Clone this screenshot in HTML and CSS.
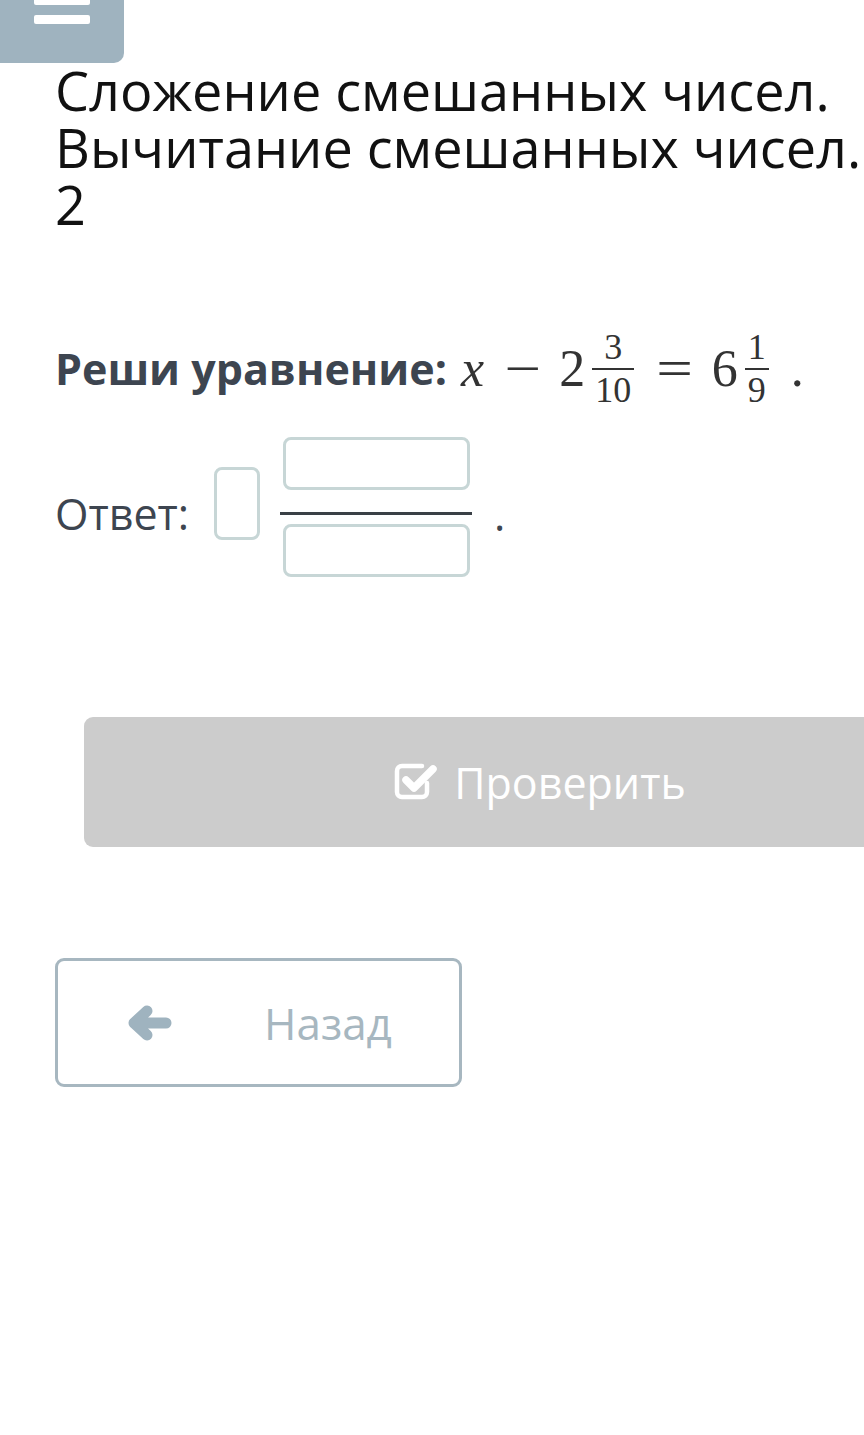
FILE: index.html
```html
<!DOCTYPE html>
<html lang="ru">
<head>
    <meta charset="UTF-8">
    <meta name="viewport" content="width=device-width, initial-scale=1.0">
    <title>Сложение смешанных чисел</title>
    <link rel="stylesheet" href="styles.css">
</head>
<body>
    <div class="menu-btn">
        <span class="bar"></span>
        <span class="bar"></span>
    </div>
    <div class="page">
        <h1 class="title">Сложение смешанных чисел. Вычитание смешанных чисел. 2</h1>

        <div class="task">
            <b>Реши уравнение:</b>
            <span class="math">
                <i class="var">x</i>
                <span class="op">−</span>
                <span class="num">2</span>
                <span class="frac"><span class="top">3</span><span class="line"></span><span class="bot">10</span></span>
                <span class="op">=</span>
                <span class="num">6</span>
                <span class="frac"><span class="top">1</span><span class="line"></span><span class="bot">9</span></span>
                <span class="dot">.</span>
            </span>
        </div>

        <div class="answer">
            <span class="answer-label">Ответ:</span>
            <input class="box whole" type="text">
            <span class="answer-frac">
                <input class="box part" type="text">
                <span class="answer-line"></span>
                <input class="box part" type="text">
            </span>
            <span class="answer-dot">.</span>
        </div>

        <button class="check-btn">
            <svg class="check-icon" width="44" height="40" viewBox="0 0 44 40">
                <path d="M33 22v9a5 5 0 0 1-5 5H8a5 5 0 0 1-5-5V10a5 5 0 0 1 5-5h20" fill="none" stroke="#fff" stroke-width="4.5" stroke-linecap="round"/>
                <path d="M12 19l8 8L39 8" fill="none" stroke="#fff" stroke-width="7.5" stroke-linecap="round" stroke-linejoin="round"/>
            </svg>
            Проверить
        </button>

        <button class="back-btn">
            <svg class="arrow-icon" width="44" height="36" viewBox="0 0 44 36">
                <path d="M19 6L6 18l13 12M6 18h32" fill="none" stroke="#9fb3bf" stroke-width="11" stroke-linecap="round" stroke-linejoin="round"/>
            </svg>
            <span class="back-text">Назад</span>
        </button>
    </div>
</body>
</html>
```

FILE: styles.css
```css
body {
    margin: 0;
    font-family: 'Open Sans', sans-serif;
    background-color: #fff;
    overflow: hidden;
}

.menu-btn {
    width: 124px;
    height: 73px;
    margin-top: -10px;
    background-color: #9fb3bf;
    border-bottom-right-radius: 10px;
    display: flex;
    flex-direction: column;
    align-items: center;
    justify-content: flex-end;
    gap: 10px;
    padding-bottom: 39px;
    box-sizing: border-box;
}

.bar {
    display: block;
    width: 56px;
    height: 9px;
    background-color: #fff;
    border-radius: 2px;
}

.page {
    padding-left: 55px;
}

.title {
    margin: -1px 0 0;
    font-size: 54px;
    font-weight: 400;
    line-height: 57px;
    color: #111;
    width: 808px;
}

.task {
    margin-top: 90px;
    display: flex;
    align-items: center;
    color: #3d4550;
    font-size: 43px;
    height: 90px;
}

.task b {
    font-weight: 700;
    margin-right: 14px;
}

.math {
    display: flex;
    align-items: center;
    font-family: 'Liberation Serif', 'DejaVu Serif', serif;
    font-size: 52px;
    color: #333;
}

.var {
    font-style: italic;
    margin-right: 20px;
}

.op {
    margin: 0 22px 0 4px;
    transform: scaleX(1.25);
}

.num {
    margin-right: 4px;
}

.frac {
    display: inline-flex;
    flex-direction: column;
    align-items: center;
    font-size: 36px;
    line-height: 30px;
    margin: 0 22px 0 3px;
}

.frac .line {
    display: block;
    align-self: stretch;
    height: 2px;
    background-color: #333;
    margin: 6px 0 5px;
}

.frac .top,
.frac .bot {
    padding: 0 3px;
}

.dot {
    margin-left: 0;
}

.answer {
    display: flex;
    align-items: center;
    margin-top: 24px;
    color: #3d4550;
    font-size: 43px;
}

.answer-label {
    margin: 12px 25px 0 0;
}

.box {
    box-sizing: border-box;
    border: 3px solid #c7d6d6;
    border-radius: 8px;
    background: #fff;
    padding: 0;
    outline: none;
}

.whole {
    width: 46px;
    height: 73px;
    margin-bottom: 8px;
}

.answer-frac {
    display: flex;
    flex-direction: column;
    align-items: center;
    margin-left: 20px;
}

.part {
    width: 187px;
    height: 53px;
}

.answer-line {
    display: block;
    width: 192px;
    height: 3px;
    background-color: #3a4046;
    margin: 22px 0 9px;
}

.answer-dot {
    margin-left: 22px;
    margin-top: 14px;
}

.check-btn {
    display: flex;
    align-items: center;
    justify-content: center;
    gap: 16px;
    margin: 140px 0 0 29px;
    width: 912px;
    height: 130px;
    border: none;
    border-radius: 9px;
    background-color: #cccccc;
    color: #fff;
    font-family: 'Open Sans', sans-serif;
    font-size: 43px;
    padding: 0;
}

.check-icon {
    margin-top: -3px;
}

.back-btn {
    display: flex;
    align-items: center;
    margin-top: 111px;
    width: 407px;
    height: 129px;
    box-sizing: border-box;
    border: 3px solid #a7b7c0;
    border-radius: 9px;
    background: #fff;
    padding: 0 0 0 70px;
    font-family: 'Open Sans', sans-serif;
    font-size: 44px;
    color: #a7b7c0;
}

.back-text {
    margin-left: 92px;
}
```
